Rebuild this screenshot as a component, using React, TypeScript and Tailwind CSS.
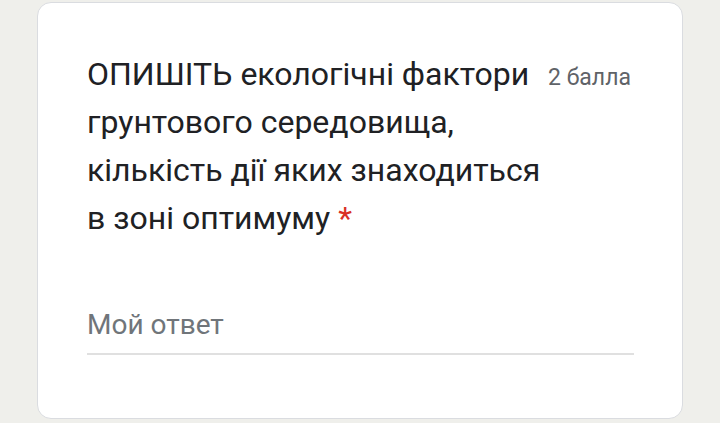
export default function App() {
  return (
    <div className="h-[423px] w-[720px] overflow-hidden bg-[#efefeb] px-[37px] pt-[2px] font-['Roboto',sans-serif]">
      <div className="h-[417px] rounded-[14px] border border-[#dadce0] bg-white pl-[49px] pr-[48px] pt-[47px]">
        <div className="flex items-baseline">
          <div className="w-[456px] text-[32px] leading-[48px] text-[#202124]">
            ОПИШІТЬ екологічні фактори грунтового середовища, кількість дії яких знаходиться в зоні оптимуму{" "}
            <span className="text-[#d93025]">*</span>
          </div>
          <div className="pl-[5px] text-[23px] text-[#5f6368]">2 балла</div>
        </div>
        <div className="mt-[65px] border-b-2 border-[#e0e0e0] pb-[10px] text-[28px] leading-[36px] text-[#70757a]">
          Мой ответ
        </div>
      </div>
    </div>
  );
}
